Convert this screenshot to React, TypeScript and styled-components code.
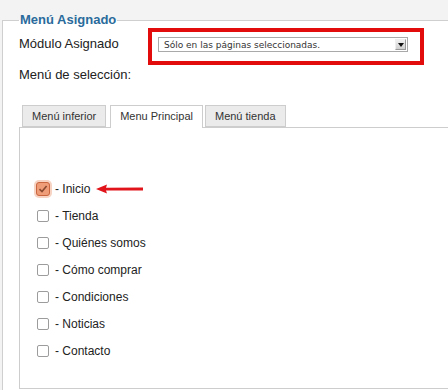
import styled, { createGlobalStyle } from "styled-components";

const GlobalStyle = createGlobalStyle`
  html, body {
    margin: 0;
    padding: 0;
    background: #f3f3f3;
    overflow: hidden;
  }
  body {
    font-family: "Liberation Sans", Arial, sans-serif;
    color: #222;
  }
`;

const Page = styled.div`
  width: 448px;
  height: 390px;
  overflow: hidden;
  padding-top: 12px;
  box-sizing: border-box;
`;

const Fieldset = styled.fieldset`
  margin: 0 0 0 2px;
  width: 480px;
  height: 400px;
  padding: 0 0 0 16px;
  border: 1px solid #cfcfcf;
  background: #fff;
  box-sizing: border-box;
`;

const Legend = styled.legend`
  padding: 0 1px;
  font-size: 13px;
  font-weight: bold;
  color: #2a6b9c;
  line-height: 16px;
`;

const Row = styled.div`
  display: flex;
  align-items: flex-start;
`;

const Label = styled.div<{ $top?: number }>`
  font-size: 13px;
  line-height: 16px;
  width: 129px;
  padding-top: ${({ $top }) => $top ?? 0}px;
  white-space: nowrap;
`;

const Highlight = styled.div`
  width: 276px;
  height: 37px;
  border: 4px solid #e30c0c;
  box-sizing: border-box;
  padding: 5px 0 0 6px;
`;

const Select = styled.div`
  width: 250px;
  height: 15px;
  border: 1px solid #a9a9a9;
  box-sizing: border-box;
  display: flex;
  align-items: center;
  justify-content: space-between;
  padding: 0 1px 0 5px;
  background: #fff;
`;

const SelectText = styled.span`
  font-family: "DejaVu Sans", sans-serif;
  font-size: 9px;
  color: #333;
`;

const SelectArrow = styled.span`
  width: 11px;
  height: 11px;
  box-sizing: border-box;
  border: 1px solid #999;
  border-top-color: #eee;
  border-left-color: #eee;
  background: linear-gradient(#f0f0f0, #cfcfcf);
  display: flex;
  align-items: center;
  justify-content: center;

  &::after {
    content: "";
    border-left: 3px solid transparent;
    border-right: 3px solid transparent;
    border-top: 4px solid #111;
  }
`;

const Tabs = styled.div`
  display: flex;
  margin: 22px 0 0 3px;
  height: 22px;
  position: relative;
  z-index: 1;
`;

const Tab = styled.div<{ $active?: boolean; $gap?: number }>`
  height: ${({ $active }) => ($active ? 23 : 22)}px;
  box-sizing: border-box;
  padding: 0 9px;
  margin-right: ${({ $gap }) => $gap ?? 0}px;
  border: 1px solid #cdcdcd;
  border-bottom: ${({ $active }) => ($active ? "none" : "1px solid #cdcdcd")};
  background: ${({ $active }) => ($active ? "#fff" : "#ebebeb")};
  font-size: 11px;
  line-height: 21px;
  color: #333;
  white-space: nowrap;
`;

const Panel = styled.div`
  border: 1px solid #cdcdcd;
  height: 262px;
  box-sizing: border-box;
  padding: 47px 0 0 16px;
`;

const Item = styled.div`
  display: flex;
  align-items: center;
  height: 27px;
  font-size: 12px;
  color: #222;
`;

const Box = styled.span`
  width: 12px;
  height: 12px;
  box-sizing: border-box;
  border: 1px solid #9c9c9c;
  border-radius: 2px;
  background: #fff;
  margin: 0 6px 0 1px;
`;

const CheckedBox = styled.span`
  width: 14px;
  height: 14px;
  box-sizing: border-box;
  border: 1px solid #c9663f;
  border-radius: 3px;
  background: #ef9c78;
  box-shadow: 0 0 0 2px #f6d3c3;
  margin: 0 5px 0 0;
  display: flex;
  align-items: center;
  justify-content: center;
`;

const Arrow = styled.svg`
  margin-left: 6px;
`;

const items = ["Tienda", "Quiénes somos", "Cómo comprar", "Condiciones", "Noticias", "Contacto"];

export default function App() {
  return (
    <Page>
      <GlobalStyle />
      <Fieldset>
        <Legend>Menú Asignado</Legend>
        <Row>
          <Label $top={8}>Módulo Asignado</Label>
          <Highlight>
            <Select>
              <SelectText>Sólo en las páginas seleccionadas.</SelectText>
              <SelectArrow />
            </Select>
          </Highlight>
        </Row>
        <Row>
          <Label $top={2}>Menú de selección:</Label>
        </Row>
        <Tabs>
          <Tab $gap={4}>Menú inferior</Tab>
          <Tab $active $gap={2}>Menu Principal</Tab>
          <Tab>Menú tienda</Tab>
        </Tabs>
        <Panel>
          <Item>
            <CheckedBox>
              <svg width="10" height="10" viewBox="0 0 10 10">
                <path d="M1.5 5.2 L4 7.6 L8.6 2" fill="none" stroke="#8a4a30" strokeWidth="1.6" />
              </svg>
            </CheckedBox>
            - Inicio
            <Arrow width="48" height="10" viewBox="0 0 48 10">
              <path d="M0 5 L11 0.5 L10 3.8 L47 3.6 L47 6.6 L10 6.4 L11 9.5 Z" fill="#e0141a" />
            </Arrow>
          </Item>
          {items.map((name) => (
            <Item key={name}>
              <Box />- {name}
            </Item>
          ))}
        </Panel>
      </Fieldset>
    </Page>
  );
}
